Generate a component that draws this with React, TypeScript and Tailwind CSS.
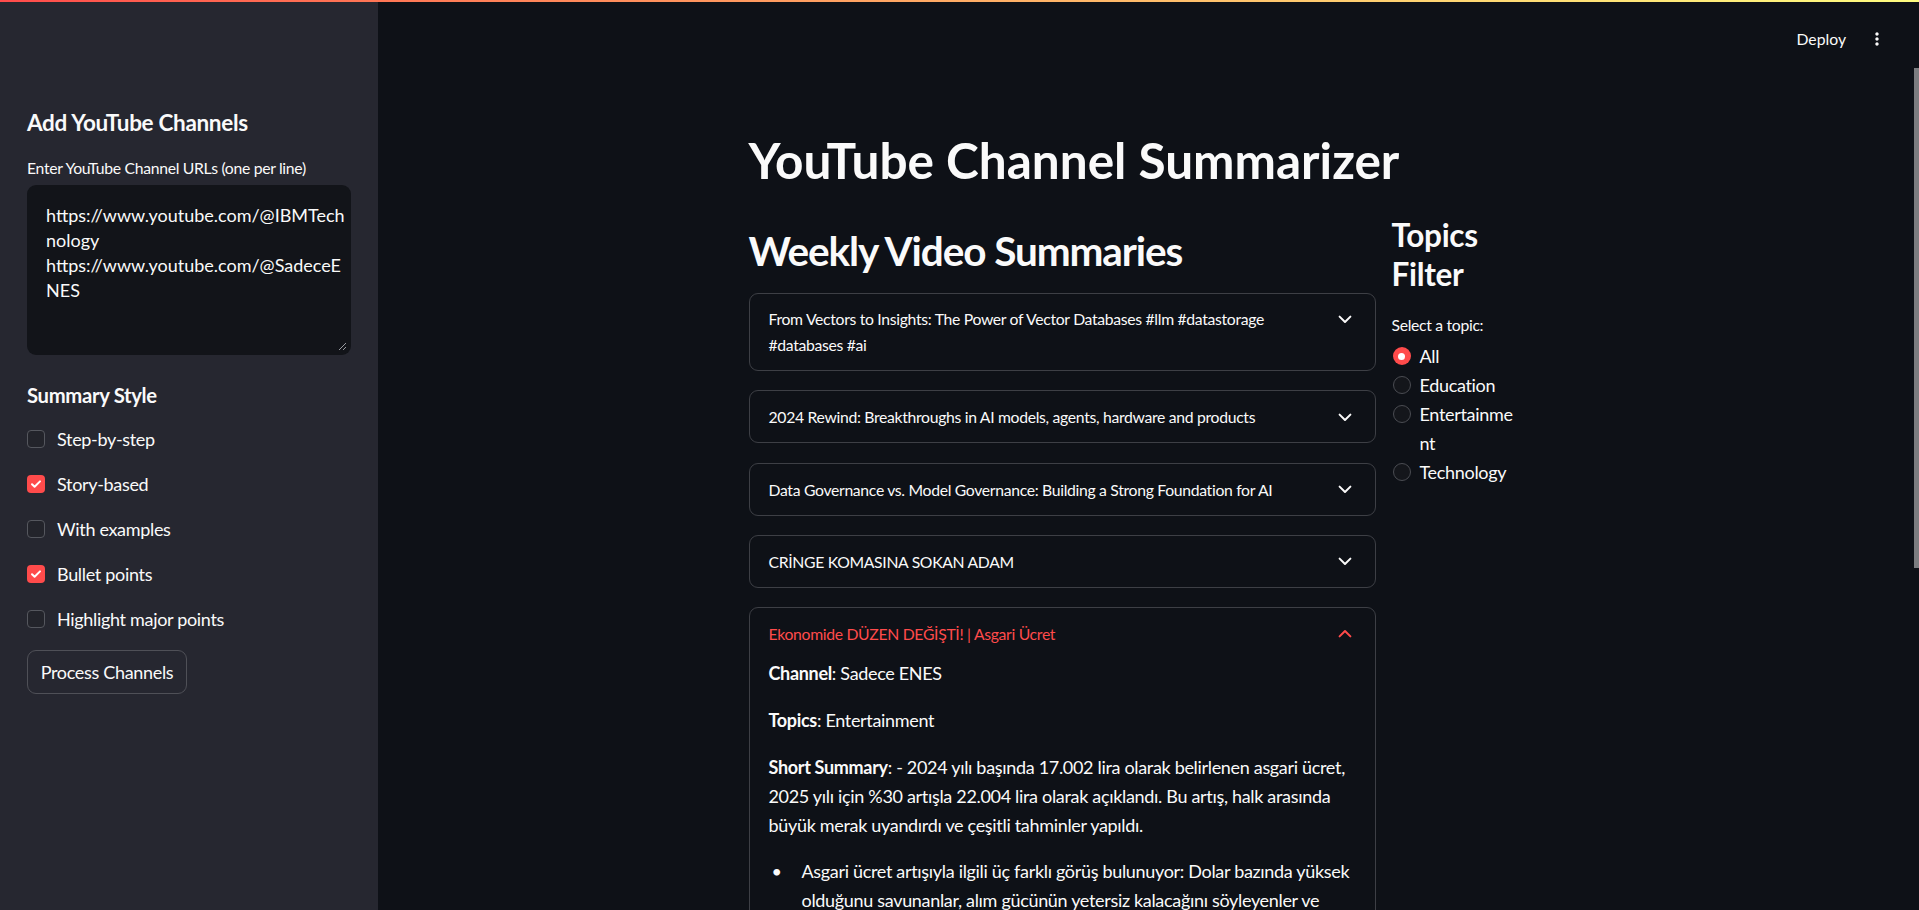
import React from 'react';

const videos = [
  'From Vectors to Insights: The Power of Vector Databases #llm #datastorage #databases #ai',
  '2024 Rewind: Breakthroughs in AI models, agents, hardware and products',
  'Data Governance vs. Model Governance: Building a Strong Foundation for AI',
  'CRİNGE KOMASINA SOKAN ADAM',
];

const styles = [
  { label: 'Step-by-step', checked: false },
  { label: 'Story-based', checked: true },
  { label: 'With examples', checked: false },
  { label: 'Bullet points', checked: true },
  { label: 'Highlight major points', checked: false },
];

const ChevronDown = ({ className = '' }: { className?: string }) => (
  <svg className={className} width="20" height="20" viewBox="0 0 20 20" fill="none">
    <path d="M4.6 7.6L10 13l5.4-5.4" stroke="currentColor" strokeWidth="2" strokeLinecap="round" strokeLinejoin="round" />
  </svg>
);

const ChevronUp = ({ className = '' }: { className?: string }) => (
  <svg className={className} width="20" height="20" viewBox="0 0 20 20" fill="none">
    <path d="M4.6 12.4L10 7l5.4 5.4" stroke="currentColor" strokeWidth="2" strokeLinecap="round" strokeLinejoin="round" />
  </svg>
);

const Checkbox = ({ checked }: { checked: boolean }) =>
  checked ? (
    <span className="flex h-[18px] w-[18px] shrink-0 items-center justify-center rounded-[4px] bg-[#ff4b4b]">
      <svg width="12" height="12" viewBox="0 0 12 12" fill="none">
        <path d="M2 6.2l2.6 2.6L10 3.4" stroke="white" strokeWidth="2" strokeLinecap="round" strokeLinejoin="round" />
      </svg>
    </span>
  ) : (
    <span className="block h-[18px] w-[18px] shrink-0 rounded-[4px] border border-[#55575e] bg-[#23242b]" />
  );

const Radio = ({ checked }: { checked: boolean }) =>
  checked ? (
    <span className="flex h-[18px] w-[18px] items-center justify-center rounded-full bg-[#ff4b4b]">
      <span className="block h-[7px] w-[7px] rounded-full bg-white" />
    </span>
  ) : (
    <span className="block h-[18px] w-[18px] rounded-full border border-[#4a4c52] bg-[#14161b]" />
  );

function Sidebar() {
  return (
    <aside className="flex w-[378px] shrink-0 flex-col bg-[#262730] px-[27px] pt-[106.5px]">
      <h2 className="text-[22.5px] font-bold leading-[27px]">Add YouTube Channels</h2>
      <label className="mt-[19px] text-[15.75px] leading-[25px]">Enter YouTube Channel URLs (one per line)</label>
      <div className="relative mt-[5.5px] h-[170px] w-[324px] rounded-[9px] bg-[#121419] px-[19px] pt-[17.5px] text-[18px] leading-[25px] tracking-normal">
        <span className="block">https://www.youtube.com/@IBMTech</span>
        <span className="block">nology</span>
        <span className="block">https://www.youtube.com/@SadeceE</span>
        <span className="block">NES</span>
        <svg className="absolute bottom-[4px] right-[4px]" width="9" height="9" viewBox="0 0 9 9">
          <path d="M8 1L1 8M8 5L5 8" stroke="#9a9ca2" strokeWidth="1" />
        </svg>
      </div>
      <h3 className="mt-[28px] text-[20.25px] font-bold leading-[24.3px]">Summary Style</h3>
      <div className="mt-[17.5px] flex flex-col gap-[16px]">
        {styles.map((s) => (
          <div key={s.label} className="flex h-[29px] items-center gap-[12px]">
            <Checkbox checked={s.checked} />
            <span className="text-[18px]">{s.label}</span>
          </div>
        ))}
      </div>
      <button className="mt-[16.5px] flex h-[44px] w-[160px] items-center justify-center rounded-[9px] border border-[#4f5057] bg-[#262730] text-[18px] text-[#fafafa]">
        Process Channels
      </button>
    </aside>
  );
}

function Expander({ title }: { title: string }) {
  return (
    <div className="flex items-start justify-between gap-[16px] rounded-[9px] border border-[#3d3f45] py-[12.75px] pl-[19px] pr-[20px]">
      <span className="text-[15.75px] leading-[25.5px]">{title}</span>
      <ChevronDown className="mt-[2.5px] shrink-0 text-[#fafafa]" />
    </div>
  );
}

function OpenExpander() {
  return (
    <div className="rounded-[9px] border border-[#3d3f45] pl-[19px] pr-[20px] pt-[12.75px]">
      <div className="flex items-start justify-between">
        <span className="text-[15.75px] leading-[25.5px] text-[#ff4b4b]">Ekonomide DÜZEN DEĞİŞTİ! | Asgari Ücret</span>
        <ChevronUp className="mt-[2.5px] shrink-0 text-[#ff4b4b]" />
      </div>
      <div className="pt-[12.75px] text-[18px] leading-[28.8px]">
        <p className="mb-[18px]">
          <b className="font-bold">Channel</b>: Sadece ENES
        </p>
        <p className="mb-[18px]">
          <b className="font-bold">Topics</b>: Entertainment
        </p>
        <p className="mb-[18px]">
          <b className="font-bold">Short Summary</b>: - 2024 yılı başında 17.002 lira olarak belirlenen asgari ücret, 2025 yılı için %30 artışla 22.004 lira olarak açıklandı. Bu artış, halk arasında büyük merak uyandırdı ve çeşitli tahminler yapıldı.
        </p>
        <ul>
          <li className="flex">
            <span className="w-[33px] shrink-0 pl-[3px]">•</span>
            <span>
              Asgari ücret artışıyla ilgili üç farklı görüş bulunuyor: Dolar bazında yüksek olduğunu savunanlar, alım gücünün yetersiz kalacağını söyleyenler ve enflasyonu körükleyeceğini düşünenler.
            </span>
          </li>
        </ul>
      </div>
    </div>
  );
}

function TopicsFilter() {
  const topics = ['All', 'Education', 'Entertainme\nnt', 'Technology'];
  return (
    <div className="flex w-[157px] shrink-0 flex-col">
      <h3 className="text-[31.5px] font-bold leading-[39px]">
        Topics
        <br />
        Filter
      </h3>
      <span className="mt-[18px] text-[15.75px] leading-[25px]">Select a topic:</span>
      <div className="mt-[5px] flex flex-col">
        {topics.map((t, i) => (
          <div key={t} className="flex items-start gap-[9px] pl-[1px]">
            <span className="mt-[5.5px] block shrink-0">
              <Radio checked={i === 0} />
            </span>
            <span className="whitespace-pre text-[18px] leading-[29px]">{t}</span>
          </div>
        ))}
      </div>
    </div>
  );
}

export default function App() {
  return (
    <div className="flex h-[910px] w-full flex-col overflow-hidden bg-[#0e1117] font-['Source_Sans_Pro','Lato',sans-serif] tracking-[-0.02em] text-[#fafafa]">
      <div className="h-[2px] w-full shrink-0 bg-gradient-to-r from-[#ff4b4b] to-[#fffd80]" />
      <div className="flex min-h-0 flex-1">
        <Sidebar />
        <main className="relative flex min-w-0 flex-1 flex-col">
          <header className="flex h-[74px] shrink-0 items-center justify-end gap-[21px] pr-[32px]">
            <span className="text-[15.75px] tracking-normal">Deploy</span>
            <svg width="20" height="20" viewBox="0 0 24 24" fill="#fafafa">
              <path d="M12 8c1.1 0 2-.9 2-2s-.9-2-2-2-2 .9-2 2 .9 2 2 2zm0 2c-1.1 0-2 .9-2 2s.9 2 2 2 2-.9 2-2-.9-2-2-2zm0 6c-1.1 0-2 .9-2 2s.9 2 2 2 2-.9 2-2-.9-2-2-2z" />
            </svg>
          </header>
          <div className="mx-auto w-[800px]">
            <h1 className="mt-[54.5px] text-[49.5px] font-bold leading-[59.4px] tracking-normal">YouTube Channel Summarizer</h1>
            <div className="mt-[26px] flex gap-[16px]">
              <div className="flex w-[627px] shrink-0 flex-col pt-[11.2px]">
                <h2 className="mb-[17px] text-[40.5px] font-bold leading-[48.6px] tracking-[-0.027em]">Weekly Video Summaries</h2>
                <div className="flex flex-col gap-[19.3px]">
                  {videos.map((v) => (
                    <Expander key={v} title={v} />
                  ))}
                  <OpenExpander />
                </div>
              </div>
              <TopicsFilter />
            </div>
          </div>
          <div className="absolute right-0 top-[66px] h-[500px] w-[5px] bg-[#7c7d80]" />
        </main>
      </div>
    </div>
  );
}
